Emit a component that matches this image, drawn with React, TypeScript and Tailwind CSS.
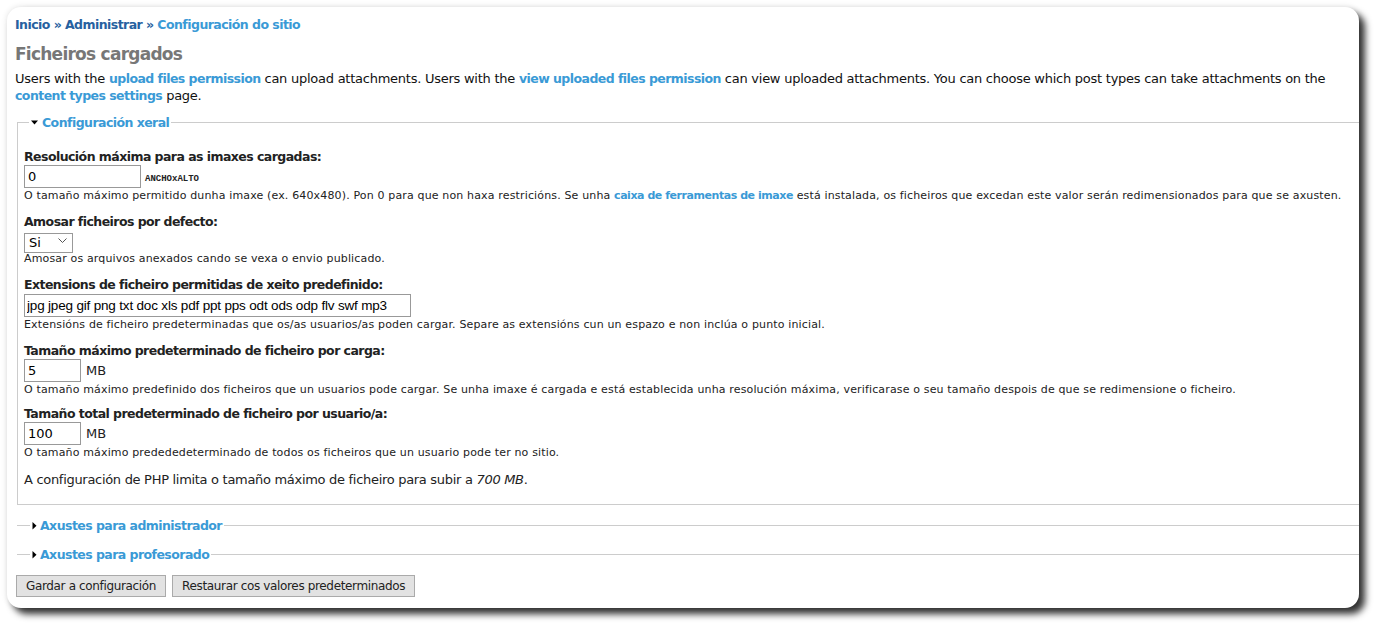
import { useState } from "react";

const verdana = "font-['DejaVu_Sans',Verdana,sans-serif]";
// tahoma-ish bold: DejaVu bold is too wide, so squeeze it a bit
const bold = "font-bold text-[12.5px] tracking-[-0.55px]";
const link = `${bold} text-[#3a9ad6]`;

interface ItemProps {
  label: string;
  children: React.ReactNode;
  description: React.ReactNode;
  className?: string;
  descClassName?: string;
}

const FormItem = ({
  label,
  children,
  description,
  className = "mb-[12px]",
  descClassName = "mt-[1px]",
}: ItemProps) => (
  <div className={className}>
    <label className={`block leading-[16px] text-[#222] ${bold}`}>{label}</label>
    {children}
    <div
      className={`${descClassName} text-[11px] leading-[13px] tracking-[0.15px] text-[#222]`}
    >
      {description}
    </div>
  </div>
);

const DownArrow = () => (
  <svg width="7" height="5" viewBox="0 0 7 5" className="mr-[4px] mb-[1px]">
    <path d="M0 0.5h7L3.5 4.5z" fill="#000" />
  </svg>
);

const RightArrow = () => (
  <svg width="5" height="8" viewBox="0 0 5 8" className="mr-[3px]">
    <path d="M0.5 0v7.5L4.5 3.75z" fill="#000" />
  </svg>
);

const CollapsedFieldset = ({ title }: { title: string }) => (
  <fieldset className="border-t border-[#ccc] ml-[2px] mr-[-40px] min-w-0 pl-[13px]">
    <legend className="px-[2px] flex items-center">
      <RightArrow />
      <span className={`leading-[17px] ${link}`}>{title}</span>
    </legend>
  </fieldset>
);

export default function App() {
  const [resolution, setResolution] = useState("0");
  const [show, setShow] = useState("si");
  const [extensions, setExtensions] = useState(
    "jpg jpeg gif png txt doc xls pdf ppt pps odt ods odp flv swf mp3"
  );
  const [maxSize, setMaxSize] = useState("5");
  const [totalSize, setTotalSize] = useState("100");

  return (
    <div className={`min-h-[632px] bg-white pt-[7px] pl-[7px] ${verdana}`}>
      <div className="w-[1352px] h-[601px] bg-white rounded-[14px] overflow-hidden shadow-[6px_6px_7px_rgba(0,0,0,0.8),0_0_6px_rgba(0,0,0,0.12)] pt-[9px] pl-[8px]">
        <div className={`leading-[17px] text-[#27619f] ${bold}`}>
          <a className="text-[#27619f]">Inicio</a> »{" "}
          <a className="text-[#27619f]">Administrar</a> »{" "}
          <a className="text-[#3a9ad6]">Configuración do sitio</a>
        </div>

        <h1 className="mt-[10px] text-[17px] leading-[22px] font-bold tracking-[-0.75px] text-[#777]">
          Ficheiros cargados
        </h1>

        <p className="mt-[5px] text-[13px] leading-[17px] tracking-[-0.25px] text-[#111] pr-[10px]">
          Users with the <a className={link}>upload files permission</a> can
          upload attachments. Users with the{" "}
          <a className={link}>view uploaded files permission</a> can view uploaded
          attachments. You can choose which post types can take attachments on the{" "}
          <a className={link}>content types settings</a> page.
        </p>

        <fieldset className="mt-[10px] ml-[2px] mr-[-40px] min-w-0 border border-[#ccc] pl-[6px] pt-[18px] pb-[16px]">
          <legend className="ml-[5px] px-[2px] flex items-center">
            <DownArrow />
            <span className={`leading-[17px] ${link}`}>Configuración xeral</span>
          </legend>

          <FormItem
            label="Resolución máxima para as imaxes cargadas:"
            description={
              <>
                O tamaño máximo permitido dunha imaxe (ex. 640x480). Pon 0 para que
                non haxa restricións. Se unha{" "}
                <a className="font-bold tracking-[-0.45px] text-[#3a9ad6]">
                  caixa de ferramentas de imaxe
                </a>{" "}
                está instalada, os ficheiros que excedan este valor serán
                redimensionados para que se axusten.
              </>
            }
          >
            <div className="flex items-end">
              <input
                value={resolution}
                onChange={(e) => setResolution(e.target.value)}
                className="w-[117px] h-[23px] border border-[#999] px-[3px] text-[13px] text-black outline-none"
              />
              <span className="ml-[4px] mb-[4px] font-['Liberation_Mono',monospace] font-bold text-[9px] leading-[10px] text-[#222]">
                ANCHOxALTO
              </span>
            </div>
          </FormItem>

          <FormItem
            label="Amosar ficheiros por defecto:"
            description="Amosar os arquivos anexados cando se vexa o envio publicado."
            descClassName="mt-[2px]"
          >
            <div className="relative w-[49px] h-[20px]">
              <select
                value={show}
                onChange={(e) => setShow(e.target.value)}
                className="appearance-none w-full h-full border border-[#999] bg-white pl-[4px] text-[13px] leading-[18px] text-black outline-none"
              >
                <option value="si">Si</option>
                <option value="non">Non</option>
              </select>
              <svg
                width="9"
                height="5"
                viewBox="0 0 9 5"
                className="absolute right-[6px] top-[8px] pointer-events-none"
              >
                <path d="M0.5 0.5l4 4 4-4" fill="none" stroke="#555" strokeWidth="1" />
              </svg>
            </div>
          </FormItem>

          <FormItem
            label="Extensions de ficheiro permitidas de xeito predefinido:"
            description="Extensións de ficheiro predeterminadas que os/as usuarios/as poden cargar. Separe as extensións cun un espazo e non inclúa o punto inicial."
          >
            <input
              value={extensions}
              onChange={(e) => setExtensions(e.target.value)}
              className="w-[387px] h-[23px] border border-[#999] px-[2px] font-['Liberation_Sans',Arial,sans-serif] text-[13.5px] tracking-[-0.18px] text-black outline-none"
            />
          </FormItem>

          <FormItem
            label="Tamaño máximo predeterminado de ficheiro por carga:"
            description="O tamaño máximo predefinido dos ficheiros que un usuarios pode cargar. Se unha imaxe é cargada e está establecida unha resolución máxima, verificarase o seu tamaño despois de que se redimensione o ficheiro."
            className="mb-[10px]"
          >
            <div className="flex items-center">
              <input
                value={maxSize}
                onChange={(e) => setMaxSize(e.target.value)}
                className="w-[57px] h-[23px] border border-[#999] px-[3px] text-[13px] text-black outline-none"
              />
              <span className="ml-[5px] text-[13px] text-[#222]">MB</span>
            </div>
          </FormItem>

          <FormItem
            label="Tamaño total predeterminado de ficheiro por usuario/a:"
            description="O tamaño máximo predededeterminado de todos os ficheiros que un usuario pode ter no sitio."
          >
            <div className="flex items-center">
              <input
                value={totalSize}
                onChange={(e) => setTotalSize(e.target.value)}
                className="w-[57px] h-[23px] border border-[#999] px-[3px] text-[13px] text-black outline-none"
              />
              <span className="ml-[5px] text-[13px] text-[#222]">MB</span>
            </div>
          </FormItem>

          <p className="text-[13px] leading-[17px] tracking-[-0.3px] text-[#222]">
            A configuración de PHP limita o tamaño máximo de ficheiro para subir a{" "}
            <em>700 MB</em>.
          </p>
        </fieldset>

        <div className="mt-[12px] flex flex-col gap-[12px]">
          <CollapsedFieldset title="Axustes para administrador" />
          <CollapsedFieldset title="Axustes para profesorado" />
        </div>

        <div className="mt-[12px] ml-[1px] flex gap-[6px]">
          <button className="h-[22px] px-[9px] border border-[#aaa] bg-[#e2e2e2] text-[12px] tracking-[-0.35px] text-[#222]">
            Gardar a configuración
          </button>
          <button className="h-[22px] px-[9px] border border-[#aaa] bg-[#e2e2e2] text-[12px] tracking-[-0.35px] text-[#222]">
            Restaurar cos valores predeterminados
          </button>
        </div>
      </div>
    </div>
  );
}
